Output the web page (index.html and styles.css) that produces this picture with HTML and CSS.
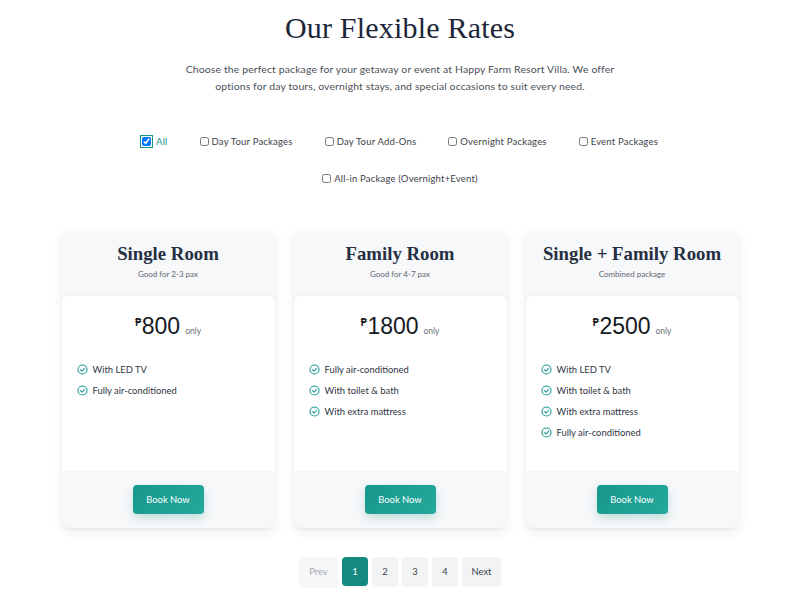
FILE: index.html
```html
<!DOCTYPE html>
<html lang="en">
<head>
<meta charset="utf-8">
<title>Our Flexible Rates</title>
<link rel="stylesheet" href="styles.css">
</head>
<body>
<main class="rates">
  <header class="intro">
    <h1 class="title">Our Flexible Rates</h1>
    <p class="lead">Choose the perfect package for your getaway or event at Happy Farm Resort Villa. We offer<br>options for day tours, overnight stays, and special occasions to suit every need.</p>
  </header>

  <div class="filters">
    <label class="filter active"><input type="checkbox" checked class="cb cb-focus"><span>All</span></label>
    <label class="filter"><input type="checkbox" class="cb"><span>Day Tour Packages</span></label>
    <label class="filter"><input type="checkbox" class="cb"><span>Day Tour Add-Ons</span></label>
    <label class="filter"><input type="checkbox" class="cb"><span>Overnight Packages</span></label>
    <label class="filter"><input type="checkbox" class="cb"><span>Event Packages</span></label>
    <label class="filter"><input type="checkbox" class="cb"><span>All-in Package (Overnight+Event)</span></label>
  </div>

  <section class="cards">
    <article class="card">
      <div class="card-head">
        <h2 class="card-title">Single Room</h2>
        <p class="card-sub">Good for 2-3 pax</p>
      </div>
      <div class="card-body">
        <div class="price"><span class="peso">₱</span><span class="amount">800</span><span class="only">only</span></div>
        <ul class="features">
          <li><svg class="check" viewBox="0 0 16 16"><circle cx="8" cy="8" r="6.6"/><path d="M5.2 8.3l2 1.9 3.7-4"/></svg>With LED TV</li>
          <li><svg class="check" viewBox="0 0 16 16"><circle cx="8" cy="8" r="6.6"/><path d="M5.2 8.3l2 1.9 3.7-4"/></svg>Fully air-conditioned</li>
        </ul>
      </div>
      <div class="card-foot"><button class="book">Book Now</button></div>
    </article>

    <article class="card">
      <div class="card-head">
        <h2 class="card-title">Family Room</h2>
        <p class="card-sub">Good for 4-7 pax</p>
      </div>
      <div class="card-body">
        <div class="price"><span class="peso">₱</span><span class="amount">1800</span><span class="only">only</span></div>
        <ul class="features">
          <li><svg class="check" viewBox="0 0 16 16"><circle cx="8" cy="8" r="6.6"/><path d="M5.2 8.3l2 1.9 3.7-4"/></svg>Fully air-conditioned</li>
          <li><svg class="check" viewBox="0 0 16 16"><circle cx="8" cy="8" r="6.6"/><path d="M5.2 8.3l2 1.9 3.7-4"/></svg>With toilet &amp; bath</li>
          <li><svg class="check" viewBox="0 0 16 16"><circle cx="8" cy="8" r="6.6"/><path d="M5.2 8.3l2 1.9 3.7-4"/></svg>With extra mattress</li>
        </ul>
      </div>
      <div class="card-foot"><button class="book">Book Now</button></div>
    </article>

    <article class="card">
      <div class="card-head">
        <h2 class="card-title">Single + Family Room</h2>
        <p class="card-sub">Combined package</p>
      </div>
      <div class="card-body">
        <div class="price"><span class="peso">₱</span><span class="amount">2500</span><span class="only">only</span></div>
        <ul class="features">
          <li><svg class="check" viewBox="0 0 16 16"><circle cx="8" cy="8" r="6.6"/><path d="M5.2 8.3l2 1.9 3.7-4"/></svg>With LED TV</li>
          <li><svg class="check" viewBox="0 0 16 16"><circle cx="8" cy="8" r="6.6"/><path d="M5.2 8.3l2 1.9 3.7-4"/></svg>With toilet &amp; bath</li>
          <li><svg class="check" viewBox="0 0 16 16"><circle cx="8" cy="8" r="6.6"/><path d="M5.2 8.3l2 1.9 3.7-4"/></svg>With extra mattress</li>
          <li><svg class="check" viewBox="0 0 16 16"><circle cx="8" cy="8" r="6.6"/><path d="M5.2 8.3l2 1.9 3.7-4"/></svg>Fully air-conditioned</li>
        </ul>
      </div>
      <div class="card-foot"><button class="book">Book Now</button></div>
    </article>
  </section>

  <nav class="pager">
    <button class="page page-wide page-disabled">Prev</button>
    <button class="page page-current">1</button>
    <button class="page">2</button>
    <button class="page">3</button>
    <button class="page">4</button>
    <button class="page page-wide">Next</button>
  </nav>
</main>
</body>
</html>
```

FILE: styles.css
```css
* { box-sizing: border-box; }

html, body {
  margin: 0;
  padding: 0;
  background: #ffffff;
}

body {
  font-family: "Lato", "Noto Sans", sans-serif;
  color: #333a44;
  width: 800px;
  height: 600px;
  overflow: hidden;
}

.rates {
  display: flex;
  flex-direction: column;
  align-items: center;
  padding-top: 8px;
}

.intro {
  display: flex;
  flex-direction: column;
  align-items: center;
}

.title {
  margin: 0;
  font-family: "Liberation Serif", "DejaVu Serif", serif;
  font-weight: 400;
  font-size: 30px;
  line-height: 40px;
  color: #1d2638;
  letter-spacing: 0.2px;
}

.lead {
  margin: 13px 0 0;
  font-size: 10.4px;
  line-height: 17px;
  color: #4a4f57;
  text-align: center;
  letter-spacing: 0.15px;
}

.filters {
  margin-top: 38px;
  width: 560px;
  display: flex;
  flex-wrap: wrap;
  justify-content: center;
  column-gap: 32px;
  row-gap: 20px;
}

.filter {
  display: flex;
  align-items: center;
  gap: 3px;
  font-size: 9.5px;
  line-height: 17px;
  color: #3d434b;
  letter-spacing: 0.2px;
}

.filter.active {
  color: #15928a;
  gap: 5px;
}

.cb {
  width: 9px;
  height: 9px;
  margin: 0;
}

.cb-focus {
  outline: 1.5px solid #15928a;
  outline-offset: 1px;
}

.cards {
  margin-top: 44px;
  display: flex;
  gap: 19px;
}

.card {
  width: 213px;
  height: 297px;
  display: flex;
  flex-direction: column;
  background: #f6f8fa;
  border-radius: 8px;
  box-shadow: 0 4px 12px rgba(30, 40, 60, 0.08), 0 1px 3px rgba(30, 40, 60, 0.05);
  overflow: hidden;
}

.card-head {
  height: 65px;
  display: flex;
  flex-direction: column;
  align-items: center;
  padding-top: 11px;
}

.card-title {
  margin: 0;
  font-family: "Liberation Serif", "DejaVu Serif", serif;
  font-weight: 700;
  font-size: 18.8px;
  line-height: 24px;
  color: #263042;
}

.card-sub {
  margin: 3px 0 0;
  font-size: 8px;
  line-height: 11px;
  color: #5f6670;
}

.card-body {
  flex: 1;
  background: #ffffff;
  border-radius: 6px 6px 0 0;
  box-shadow: 0 -1px 4px rgba(30, 40, 60, 0.03);
  padding-top: 17px;
}

.price {
  display: flex;
  justify-content: center;
  align-items: baseline;
  color: #15191f;
}

.peso {
  font-size: 11px;
  font-weight: 700;
  align-self: flex-start;
  margin-top: 2px;
  margin-right: 0.5px;
}

.amount {
  font-family: "Liberation Sans", "Lato", sans-serif;
  font-size: 23px;
  line-height: 26px;
}

.only {
  font-size: 8.5px;
  color: #6b7078;
  margin-left: 5px;
}

.features {
  list-style: none;
  margin: 24px 0 0;
  padding: 0 0 0 15px;
  display: flex;
  flex-direction: column;
  gap: 8px;
}

.features li {
  display: flex;
  align-items: center;
  gap: 5px;
  font-size: 9.4px;
  line-height: 13px;
  color: #30363f;
}

.check {
  width: 11px;
  height: 11px;
  fill: none;
  stroke: #1e9a8e;
  stroke-width: 1.6;
  stroke-linecap: round;
  stroke-linejoin: round;
}

.card-foot {
  height: 57px;
  display: flex;
  align-items: center;
  justify-content: center;
  padding-bottom: 1px;
}

.book {
  width: 71px;
  height: 29px;
  border: none;
  border-radius: 4px;
  background: linear-gradient(135deg, #18978b 0%, #23a99c 100%);
  color: #ffffff;
  font-family: inherit;
  font-size: 9.4px;
  box-shadow: 0 4px 8px rgba(20, 120, 110, 0.22);
}

.pager {
  margin-top: 29px;
  display: flex;
  gap: 4px;
}

.page {
  width: 26px;
  height: 29px;
  border: none;
  border-radius: 4px;
  background: #f2f3f4;
  color: #3b4048;
  font-family: inherit;
  font-size: 9.4px;
  box-shadow: 0 1px 2px rgba(0, 0, 0, 0.06);
  padding: 0;
}

.page-wide {
  width: 39px;
}

.page-disabled {
  color: #a3a7ad;
  background: #f6f7f8;
}

.page-current {
  background: #13897f;
  color: #ffffff;
}
```
